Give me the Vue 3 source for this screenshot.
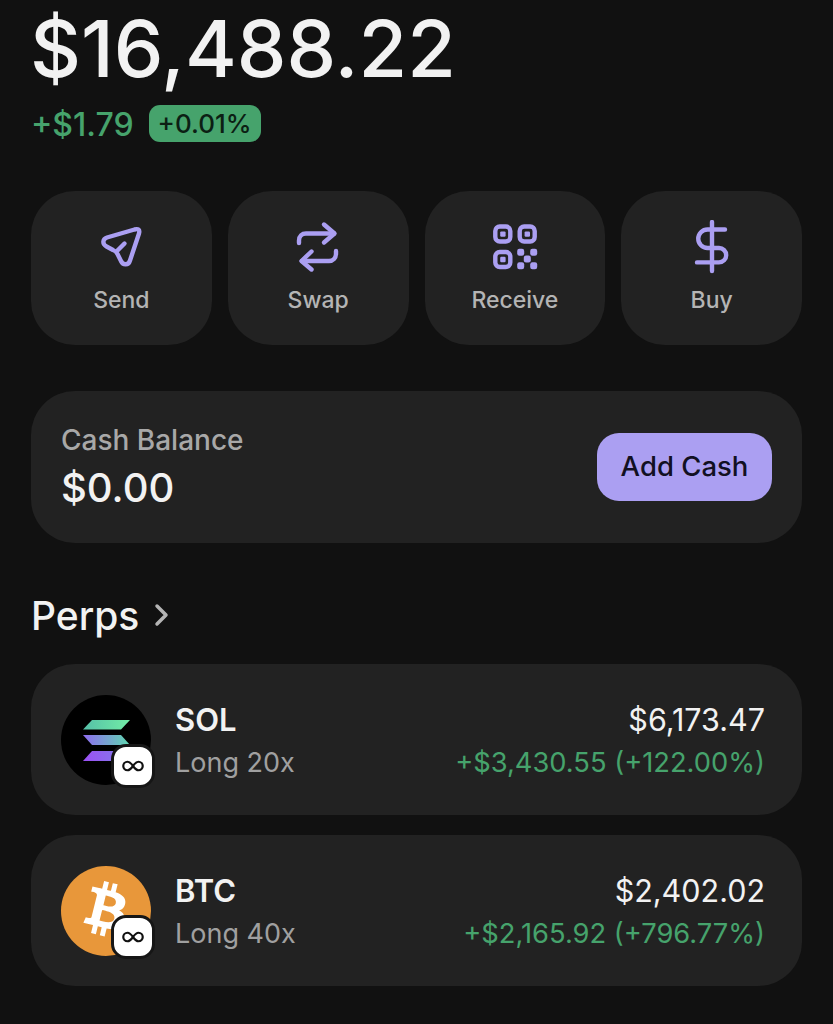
<template>
  <section class="wallet">
    <h1 class="total">$16,488.22</h1>

    <div class="change">
      <span class="change-value">+$1.79</span>
      <span class="change-pill">+0.01%</span>
    </div>

    <div class="actions">
      <div class="action">
        <svg class="action-icon" viewBox="0 0 54 54" fill="none">
          <path d="M13 17.500 40.500 9.500Q46.500 8 45 13.500L36 40.500C34.500 45.500 29 45.500 27 41L23.500 34Q22 31 19 30L12.500 26.500C8 24 8.500 19 13 17.500Z" />
          <path d="M23.500 30.500 30.500 23.500" />
        </svg>
        <span>Send</span>
      </div>
      <div class="action">
        <svg class="action-icon" viewBox="0 0 54 54" fill="none">
          <path d="M8 23v-2.500C8 16 11 13.500 15 13.500H43" />
          <path d="M33 4.500l10.500 9L33 22.500" />
          <path d="M45 31v2.500C45 38 42 41 38 41H11" />
          <path d="M20.500 31.500 10.500 41 20.500 49.500" />
        </svg>
        <span>Swap</span>
      </div>
      <div class="action">
        <svg class="action-icon" viewBox="0 0 54 54" fill="none">
          <rect x="7.300" y="6.500" width="15" height="15" rx="4.500" />
          <rect x="31.700" y="6.500" width="15" height="15" rx="4.500" />
          <rect x="7.300" y="32" width="15" height="15" rx="4.500" />
          <rect class="solid" x="12.200" y="11.400" width="5.400" height="5.400" rx="1.200" />
          <rect class="solid" x="36.600" y="11.400" width="5.400" height="5.400" rx="1.200" />
          <rect class="solid" x="12.200" y="36.800" width="5.400" height="5.400" rx="1.200" />
          <rect class="solid" x="29.200" y="28.800" width="7" height="7" rx="2.200" />
          <rect class="solid" x="42.200" y="28.800" width="7" height="7" rx="2.200" />
          <rect class="solid" x="35.800" y="35.500" width="7" height="7" rx="2.200" />
          <rect class="solid" x="29.200" y="42.200" width="7" height="7" rx="2.200" />
          <rect class="solid" x="42.200" y="42.200" width="7" height="7" rx="2.200" />
        </svg>
        <span>Receive</span>
      </div>
      <div class="action">
        <svg class="action-icon" viewBox="0 0 54 54" fill="none">
          <path d="M27 2v49" />
          <path d="M40 9.500H22.500a9.250 9.250 0 0 0 0 18.500h11.500a7.200 7.200 0 0 1 0 14.400H12" />
        </svg>
        <span>Buy</span>
      </div>
    </div>

    <div class="cash-card">
      <div>
        <div class="cash-label">Cash Balance</div>
        <div class="cash-value">$0.00</div>
      </div>
      <button class="add-cash" type="button">Add Cash</button>
    </div>

    <h2 class="perps-title">
      Perps
      <svg class="chevron" viewBox="0 0 16 24" fill="none">
        <path d="m3 3 9 9-9 9" />
      </svg>
    </h2>

    <div class="positions">
      <div v-for="p in positions" :key="p.symbol" class="position">
        <div class="coin">
          <svg v-if="p.symbol === 'SOL'" class="coin-logo" viewBox="0 0 90 90">
            <defs>
              <linearGradient id="solA" x1="0" y1="0" x2="1" y2="0">
                <stop offset="0" stop-color="#55c0a8" />
                <stop offset="1" stop-color="#72eda6" />
              </linearGradient>
              <linearGradient id="solB" x1="0" y1="0" x2="1" y2="0">
                <stop offset="0" stop-color="#8f6cf0" />
                <stop offset="1" stop-color="#5fd8b0" />
              </linearGradient>
              <linearGradient id="solC" x1="0" y1="0" x2="1" y2="0">
                <stop offset="0" stop-color="#9c50f5" />
                <stop offset="1" stop-color="#7f80e8" />
              </linearGradient>
            </defs>
            <circle cx="45" cy="45" r="45" fill="#000" />
            <path d="M31 25h38l-9 9.500H22Z" fill="url(#solA)" />
            <path d="M22 40h38l9 10H31Z" fill="url(#solB)" />
            <path d="M31 56h38l-9 10H22Z" fill="url(#solC)" />
          </svg>
          <svg v-else class="coin-logo" viewBox="0 0 90 90">
            <circle cx="45" cy="45" r="45" fill="#e8973a" />
            <path
              transform="translate(45 43.500) scale(3.650) translate(-12 -12)"
              fill="#fff"
              d="M17.288 10.291c.24-1.590-.974-2.450-2.640-3.030l.54-2.153-1.315-.33-.525 2.107c-.345-.087-.705-.167-1.064-.25l.526-2.127-1.320-.33-.54 2.165c-.285-.067-.565-.132-.84-.2l-1.815-.45-.35 1.407s.975.225.955.236c.535.136.63.486.615.766l-1.477 5.920c-.075.166-.24.406-.614.314.015.02-.96-.24-.96-.24l-.66 1.510 1.710.426.93.242-.54 2.190 1.320.327.54-2.170c.36.1.705.19 1.050.273l-.51 2.154 1.320.33.545-2.190c2.240.427 3.930.257 4.640-1.774.57-1.637-.03-2.580-1.217-3.196.854-.193 1.500-.76 1.680-1.930h.01zm-3.010 4.220c-.404 1.640-3.157.75-4.050.53l.72-2.900c.896.23 3.757.67 3.330 2.370zm.41-4.240c-.37 1.490-2.662.735-3.405.55l.654-2.640c.744.18 3.137.524 2.750 2.084v.006z"
            />
          </svg>
          <span class="badge">
            <svg viewBox="0 0 26 14" fill="none">
              <path d="M13 7C10.500 3.500 9 2 6.500 2a5 5 0 0 0 0 10C9 12 10.500 10.500 13 7Zm0 0c2.500-3.500 4-5 6.500-5a5 5 0 0 1 0 10C17 12 15.500 10.500 13 7Z" />
            </svg>
          </span>
        </div>
        <div class="position-info">
          <div class="symbol">{{ p.symbol }}</div>
          <div class="leverage">{{ p.leverage }}</div>
        </div>
        <div class="position-values">
          <div class="amount">{{ p.amount }}</div>
          <div class="pnl">{{ p.pnl }}</div>
        </div>
      </div>
    </div>
  </section>
</template>

<script setup>
const positions = [
  { symbol: 'SOL', leverage: 'Long 20x', amount: '$6,173.47', pnl: '+$3,430.55 (+122.00%)' },
  { symbol: 'BTC', leverage: 'Long 40x', amount: '$2,402.02', pnl: '+$2,165.92 (+796.77%)' }
]
</script>

<style>
html, body { background: #111111; }
</style>

<style scoped>
.wallet {
  box-sizing: border-box;
  width: 833px;
  height: 1024px;
  overflow: hidden;
  padding: 0 31px;
  background: #111111;
  font-family: Inter, "Liberation Sans", sans-serif;
  color: #f2f2f2;
}
.total {
  margin: 0 0 0 -1px;
  font-size: 79px;
  line-height: 96px;
  font-weight: 550;
}
.change {
  display: flex;
  align-items: center;
  gap: 15px;
  height: 38px;
  margin-top: 9px;
}
.change-value { font-size: 32px; font-weight: 500; color: #46a36c; }
.change-pill {
  margin-top: -2px;
  padding: 0 9px;
  height: 37px;
  line-height: 37px;
  border-radius: 11px;
  background: #46a36c;
  color: #0c1f14;
  font-size: 26px;
  font-weight: 500;
}
.actions {
  display: grid;
  grid-template-columns: repeat(4, 1fr);
  gap: 16px;
  margin-top: 48px;
}
.action {
  display: flex;
  flex-direction: column;
  align-items: center;
  height: 154px;
  padding-top: 29px;
  box-sizing: border-box;
  border-radius: 44px;
  background: #222222;
  color: #b4b4b4;
  font-size: 23px;
  font-weight: 500;
}
.action-icon {
  width: 54px;
  height: 54px;
  margin-bottom: 12px;
  stroke: #ab9ff2;
  stroke-width: 4.400;
  stroke-linecap: round;
  stroke-linejoin: round;
}
.action-icon .solid { fill: #ab9ff2; stroke: none; }
.cash-card {
  display: flex;
  align-items: center;
  justify-content: space-between;
  height: 152px;
  margin-top: 46px;
  padding: 0 30px;
  box-sizing: border-box;
  border-radius: 44px;
  background: #222222;
}
.cash-label { font-size: 28px; font-weight: 500; color: #a8a8a8; line-height: 34px; }
.cash-value { margin-top: 8px; font-size: 40px; font-weight: 500; line-height: 46px; }
.add-cash {
  width: 175px;
  height: 68px;
  padding: 0 0 2px;
  border: 0;
  border-radius: 22px;
  background: #ab9ff2;
  color: #121022;
  font-family: inherit;
  font-size: 27.500px;
  font-weight: 500;
}
.perps-title {
  display: flex;
  align-items: center;
  gap: 15px;
  margin: 49px 0 0;
  height: 46px;
  font-size: 39px;
  font-weight: 500;
}
.chevron {
  width: 16px;
  height: 24px;
  stroke: #b4b4b4;
  stroke-width: 3.500;
  stroke-linecap: round;
  stroke-linejoin: round;
}
.positions {
  display: flex;
  flex-direction: column;
  gap: 20px;
  margin-top: 26px;
}
.position {
  display: flex;
  align-items: center;
  height: 151px;
  padding: 0 37px 0 30px;
  box-sizing: border-box;
  border-radius: 44px;
  background: #222222;
}
.coin { position: relative; width: 90px; height: 90px; flex: none; }
.coin-logo { display: block; width: 90px; height: 90px; }
.badge {
  position: absolute;
  right: -4px;
  bottom: -3px;
  box-sizing: border-box;
  display: flex;
  align-items: center;
  justify-content: center;
  width: 44px;
  height: 44px;
  border: 3px solid #161616;
  border-radius: 15px;
  background: #fff;
}
.badge svg {
  width: 22px;
  height: 12px;
  stroke: #111;
  stroke-width: 2.600;
}
.position-info { margin-left: 24px; padding-top: 2px; }
.symbol { font-size: 31px; font-weight: 600; line-height: 36px; }
.leverage { margin-top: 8px; font-size: 27px; color: #a0a0a0; line-height: 34px; }
.position-values { margin-left: auto; padding-top: 2px; text-align: right; }
.amount { font-size: 30.500px; font-weight: 400; line-height: 36px; }
.pnl { margin-top: 8px; font-size: 27.300px; color: #46a36c; line-height: 34px; }
</style>
